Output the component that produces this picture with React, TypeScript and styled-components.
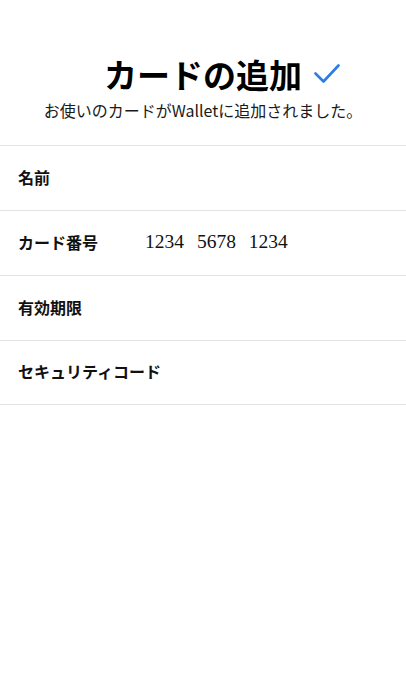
import React from 'react'
import styled, { createGlobalStyle } from 'styled-components'

const GlobalStyle = createGlobalStyle`
    html, body {
        margin: 0;
        padding: 0;
        background: #ffffff;
    }
    body {
        font-family: 'Noto Sans CJK JP', 'Noto Sans', sans-serif;
        color: #000000;
    }
`

const fields = [
    { label: '名前', value: '' },
    { label: 'カード番号', value: '1234 5678 1234' },
    { label: '有効期限', value: '' },
    { label: 'セキュリティコード', value: '' },
]

export default function App() {
  return (
    <Page>
        <GlobalStyle />
        <Header>
            <TitleWrap>
                <Title>カードの追加</Title>
                <Check viewBox="0 0 26 20" aria-hidden>
                    <path d="M1.5 9.5 L9.5 17.5 L24.5 1.5" />
                </Check>
            </TitleWrap>
            <Subtitle>お使いのカードがWalletに追加されました。</Subtitle>
        </Header>
        <FieldList>
            {fields.map((f) => (
                <FieldRow key={f.label}>
                    <Label>{f.label}</Label>
                    {f.value && <Value>{f.value}</Value>}
                </FieldRow>
            ))}
        </FieldList>
    </Page>
  )
}

const Page = styled.div`
    width: 406px;
    min-height: 700px;

    display: flex;
    flex-direction: column;

    background: #ffffff;
`

const Header = styled.div`
    display: flex;
    flex-direction: column;
    align-items: center;

    padding: 52px 0 23px;
    gap: 2px;
`

const TitleWrap = styled.div`
    position: relative;
    display: flex;
    align-items: center;
`

const Title = styled.h1`
    margin: 0;
    font-family: 'Noto Sans CJK JP', sans-serif;
    font-weight: 700;
    font-size: 33px;
    line-height: 44px;
    letter-spacing: 0;

    color: #000000;
`

const Check = styled.svg`
    position: absolute;
    left: calc(100% + 12px);
    top: 12px;
    width: 26px;
    height: 20px;

    fill: none;
    stroke: #2b7fe3;
    stroke-width: 2.6;
    stroke-linecap: round;
    stroke-linejoin: round;
`

const Subtitle = styled.p`
    margin: 0;
    font-family: 'Noto Sans CJK JP', sans-serif;
    font-weight: 400;
    font-size: 16px;
    line-height: 24px;

    color: #1a1a1a;
`

const FieldList = styled.div`
    display: flex;
    flex-direction: column;

    border-top: 1px solid #e3e3e3;
`

const FieldRow = styled.div`
    height: 65px;
    box-sizing: border-box;

    display: flex;
    flex-direction: row;
    align-items: center;

    padding: 0 18px 3px;
    border-bottom: 1px solid #e3e3e3;

    &:last-child {
        height: 64px;
    }
`

const Label = styled.span`
    min-width: 127px;
    flex-shrink: 0;
    white-space: nowrap;

    font-family: 'Noto Sans CJK JP', sans-serif;
    font-weight: 700;
    font-size: 16px;
    line-height: 22px;

    color: #111111;
`

const Value = styled.span`
    font-family: 'Liberation Serif', 'Times New Roman', serif;
    font-size: 19.5px;
    line-height: 24px;
    word-spacing: 8px;

    color: #111111;
`
